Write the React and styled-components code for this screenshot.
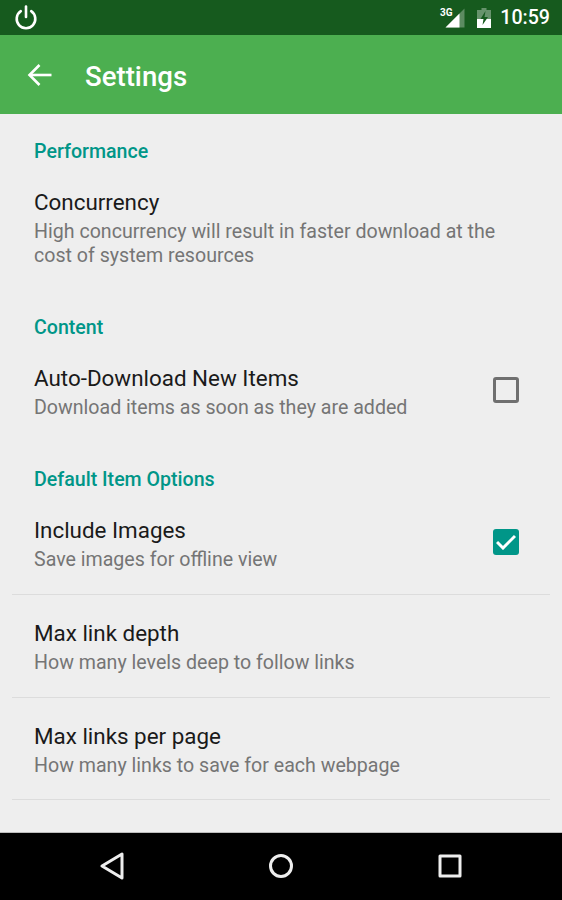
import React from "react";
import styled, { createGlobalStyle } from "styled-components";

const GlobalStyle = createGlobalStyle`
  html, body {
    margin: 0;
    padding: 0;
    background: #eeeeee;
    font-family: Roboto, "Noto Sans", sans-serif;
  }
`;

const Screen = styled.div`
  width: 562px;
  height: 900px;
  display: flex;
  flex-direction: column;
  overflow: hidden;
`;

const StatusBar = styled.div`
  height: 35px;
  background: #165a1e;
  display: flex;
  align-items: center;
  justify-content: space-between;
  padding: 0 12px 0 14px;
  color: #fff;
`;

const StatusRight = styled.div`
  display: flex;
  align-items: center;
  gap: 12px;
`;

const Clock = styled.span`
  font-size: 19.6px;
  font-weight: 500;
  margin-left: -3px;
`;

const AppBar = styled.div`
  height: 79px;
  background: #4caf50;
  display: flex;
  align-items: center;
  padding-left: 27px;
  color: #fff;
`;

const Title = styled.h1`
  margin: 3px 0 0 32px;
  font-size: 27.6px;
  font-weight: 500;
`;

const Content = styled.div`
  flex: 1;
  background: #eeeeee;
  padding: 24px 12px 0;
  border-bottom: 1px solid #bdbdbd;
`;

const SectionTitle = styled.div`
  color: #009688;
  font-size: 19.6px;
  font-weight: 500;
  line-height: 28px;
  padding-left: 22px;
`;

const Row = styled.div`
  display: flex;
  align-items: center;
  justify-content: space-between;
  padding: ${(p) => (p.$divided ? "23px 31px 21.5px 22px" : "21px 31px 22px 22px")};
  margin-bottom: ${(p) => (p.$line ? 0 : 24)}px;
  border-bottom: ${(p) => (p.$line ? "1px solid #dcdcdc" : "none")};
`;

const RowText = styled.div`
  display: flex;
  flex-direction: column;
`;

const RowTitle = styled.div`
  color: #1a1a1a;
  font-size: 22.4px;
  line-height: 30px;
`;

const RowSub = styled.div`
  color: #757575;
  font-size: 19.6px;
  line-height: 24px;
  margin-top: 3px;
`;

const Check = styled.div`
  width: 26px;
  height: 26px;
  box-sizing: border-box;
  border-radius: 3px;
  border: ${(p) => (p.$on ? "none" : "3px solid #6f6f6f")};
  background: ${(p) => (p.$on ? "#009688" : "transparent")};
  display: flex;
  align-items: center;
  justify-content: center;
  margin-bottom: 4px;
`;

const NavBar = styled.div`
  height: 66px;
  background: #000;
  display: flex;
  align-items: center;
  justify-content: space-between;
  padding: 0 100px 1px;
`;

const Power = () => (
  <svg width="24" height="26" viewBox="0 0 24 26" fill="none" stroke="#fff" strokeWidth="2.6" strokeLinecap="round">
    <path d="M12 1.5V12" />
    <path d="M6.8 6.2a9.3 9.3 0 1 0 10.4 0" />
  </svg>
);

const Signal = () => (
  <svg width="26" height="20" viewBox="0 0 26 20">
    <polygon points="25.5,0.5 25.5,19.5 6.5,19.5" fill="#fff" fillOpacity="0.3" />
    <polygon points="20.5,5.5 20.5,19.5 6.5,19.5" fill="#fff" />
    <text x="1" y="7.8" fill="#fff" fontSize="10" fontWeight="700" fontFamily="Roboto, sans-serif">3G</text>
  </svg>
);

const Battery = () => (
  <svg width="14" height="20" viewBox="0 0 14 20">
    <path d="M4.5 0h5v2H14v18H0V2h4.5z" fill="#fff" fillOpacity="0.35" />
    <path d="M0 11h14v9H0z" fill="#fff" />
    <path d="M8.5 3 3.5 11H6.5L5.5 17 11 9H7.5z" fill="#165a1e" />
  </svg>
);

const Back = () => (
  <svg width="26" height="24" viewBox="0 0 26 24" fill="none" stroke="#fff" strokeWidth="2.6">
    <path d="M24.5 12H3" />
    <path d="M12.5 2 2.5 12l10 10" />
  </svg>
);

const CheckMark = () => (
  <svg width="20" height="16" viewBox="0 0 20 16" fill="none" stroke="#fff" strokeWidth="3">
    <path d="M1 8l6 6L19 2" />
  </svg>
);

const Triangle = () => (
  <svg width="24" height="28" viewBox="0 0 24 28" fill="none" stroke="#eee" strokeWidth="3" strokeLinejoin="round">
    <path d="M22 2v24L2 14z" />
  </svg>
);

const Circle = () => (
  <svg width="26" height="26" viewBox="0 0 26 26" fill="none" stroke="#eee" strokeWidth="3">
    <circle cx="13" cy="13" r="10.5" />
  </svg>
);

const Square = () => (
  <svg width="24" height="24" viewBox="0 0 24 24" fill="none" stroke="#eee" strokeWidth="3" strokeLinejoin="round">
    <rect x="2" y="2" width="20" height="20" />
  </svg>
);

export default function App() {
  return (
    <Screen>
      <GlobalStyle />
      <StatusBar>
        <Power />
        <StatusRight>
          <Signal />
          <Battery />
          <Clock>10:59</Clock>
        </StatusRight>
      </StatusBar>
      <AppBar>
        <Back />
        <Title>Settings</Title>
      </AppBar>
      <Content>
        <SectionTitle>Performance</SectionTitle>
        <Row>
          <RowText>
            <RowTitle>Concurrency</RowTitle>
            <RowSub>
              High concurrency will result in faster download at the
              <br />
              cost of system resources
            </RowSub>
          </RowText>
        </Row>
        <SectionTitle>Content</SectionTitle>
        <Row>
          <RowText>
            <RowTitle>Auto-Download New Items</RowTitle>
            <RowSub>Download items as soon as they are added</RowSub>
          </RowText>
          <Check />
        </Row>
        <SectionTitle>Default Item Options</SectionTitle>
        <Row $line>
          <RowText>
            <RowTitle>Include Images</RowTitle>
            <RowSub>Save images for offline view</RowSub>
          </RowText>
          <Check $on>
            <CheckMark />
          </Check>
        </Row>
        <Row $line $divided>
          <RowText>
            <RowTitle>Max link depth</RowTitle>
            <RowSub>How many levels deep to follow links</RowSub>
          </RowText>
        </Row>
        <Row $line $divided>
          <RowText>
            <RowTitle>Max links per page</RowTitle>
            <RowSub>How many links to save for each webpage</RowSub>
          </RowText>
        </Row>
      </Content>
      <NavBar>
        <Triangle />
        <Circle />
        <Square />
      </NavBar>
    </Screen>
  );
}
